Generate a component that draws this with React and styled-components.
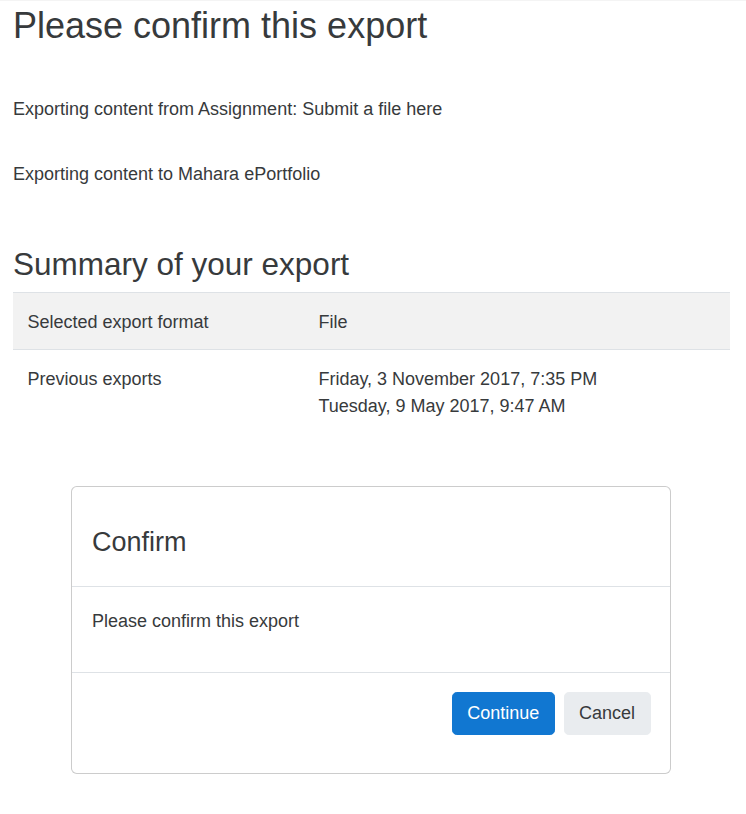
import React from "react";
import styled, { createGlobalStyle } from "styled-components";

const GlobalStyle = createGlobalStyle`
  html, body { margin: 0; padding: 0; background: #fff; }
  body {
    font-family: "Liberation Sans", Arial, Helvetica, sans-serif;
    font-size: 18px;
    line-height: 27px;
    color: #373a3c;
  }
  * { box-sizing: border-box; }
`;

const Page = styled.main`
  border-top: 1px solid #f4f4f4;
  padding: 0 16px 40px 13px;
`;

const PageTitle = styled.h2`
  margin: 3.4px 0 0;
  font-size: 36px;
  line-height: 43.2px;
  font-weight: 400;
`;

const Intro = styled.div`
  display: flex;
  flex-direction: column;
  gap: 38px;
  padding-top: 48.7px;
`;

const Info = styled.p`
  margin: 0;
`;

const SectionTitle = styled.h3`
  margin: 57.4px 0 8.5px;
  font-size: 31.5px;
  line-height: 37.8px;
  font-weight: 400;
`;

const Table = styled.table`
  width: 100%;
  border-collapse: collapse;
`;

const Row = styled.tr`
  background: ${(p) => (p.$striped ? "#f2f2f2" : "transparent")};
`;

const Cell = styled.td`
  padding: 16.4px 14.4px 12.4px;
  border-top: 1px solid #dee2e6;
  vertical-align: top;
  text-align: left;
  width: ${(p) => p.$width || "auto"};
`;

const Modal = styled.section`
  width: 600px;
  margin: 53px auto 0 58px;
  border: 1px solid rgba(0, 0, 0, 0.2);
  border-radius: 5.76px;
  background: #fff;
`;

const ModalHeader = styled.header`
  padding: 19.2px 20px;
  border-bottom: 1px solid #dee2e6;
`;

const ModalTitle = styled.h4`
  margin: 20.2px 0 8.6px;
  font-size: 27px;
  line-height: 32.4px;
  font-weight: 400;
`;

const ModalBody = styled.div`
  padding: 21.2px 20px 17.2px;
`;

const BodyText = styled.p`
  margin: 0 0 19.2px;
`;

const ModalFooter = styled.footer`
  display: flex;
  justify-content: flex-end;
  gap: 9px;
  padding: 19.2px 19.5px 38px;
  border-top: 1px solid #dee2e6;
`;

const Button = styled.button`
  font-family: inherit;
  font-size: 18px;
  line-height: 27px;
  padding: 7.2px 14.4px;
  border-radius: 4.8px;
  cursor: pointer;
  border: 1px solid ${(p) => (p.$primary ? "#1177d1" : "#e9ecef")};
  background: ${(p) => (p.$primary ? "#1177d1" : "#e9ecef")};
  color: ${(p) => (p.$primary ? "#fff" : "#373a3c")};
`;

export default function App() {
  return (
    <>
      <GlobalStyle />
      <Page>
        <PageTitle>Please confirm this export</PageTitle>
        <Intro>
          <Info>Exporting content from Assignment: Submit a file here</Info>
          <Info>Exporting content to Mahara ePortfolio</Info>
        </Intro>
        <SectionTitle>Summary of your export</SectionTitle>
        <Table>
          <tbody>
            <Row $striped>
              <Cell $width="291px">Selected export format</Cell>
              <Cell>File</Cell>
            </Row>
            <Row>
              <Cell $width="291px">Previous exports</Cell>
              <Cell>
                Friday, 3 November 2017, 7:35 PM
                <br />
                Tuesday, 9 May 2017, 9:47 AM
              </Cell>
            </Row>
          </tbody>
        </Table>
        <Modal>
          <ModalHeader>
            <ModalTitle>Confirm</ModalTitle>
          </ModalHeader>
          <ModalBody>
            <BodyText>Please confirm this export</BodyText>
          </ModalBody>
          <ModalFooter>
            <Button $primary>Continue</Button>
            <Button>Cancel</Button>
          </ModalFooter>
        </Modal>
      </Page>
    </>
  );
}
